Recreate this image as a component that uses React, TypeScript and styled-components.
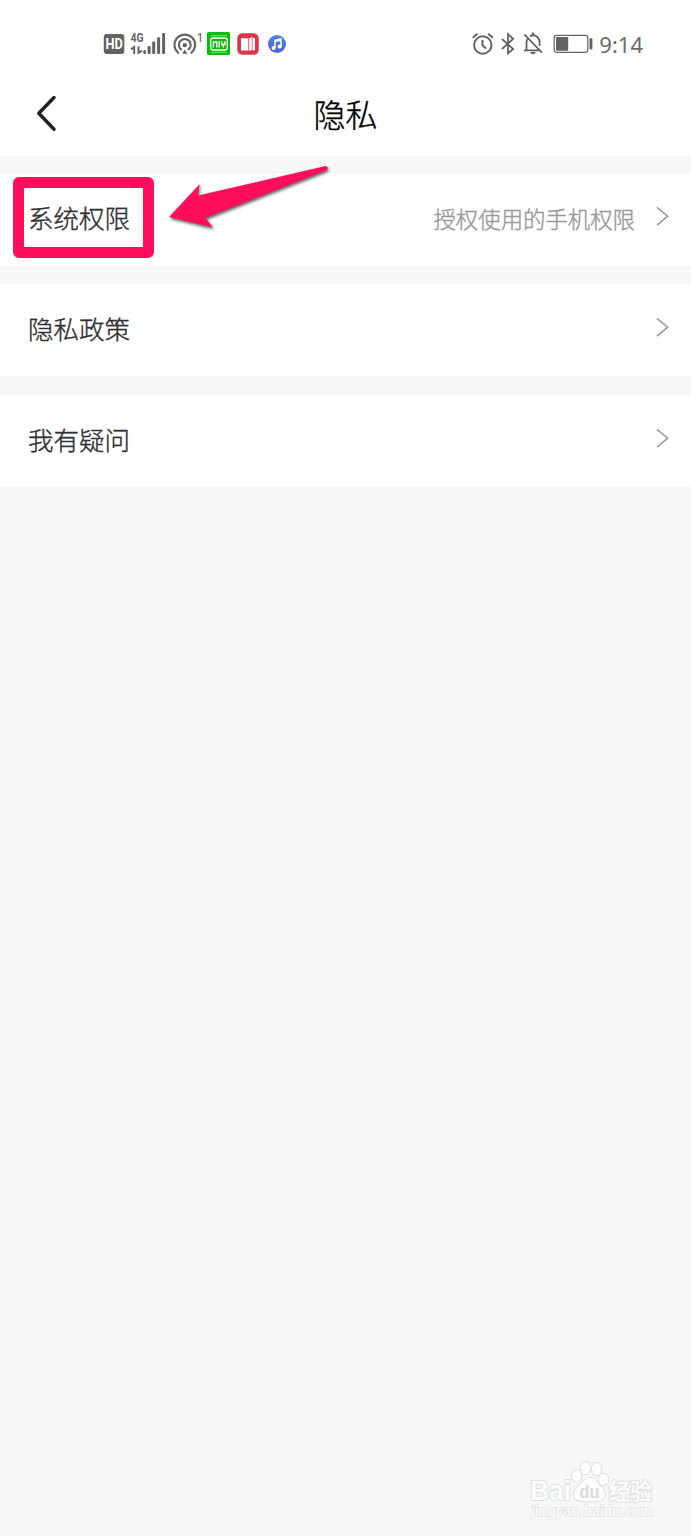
import React from "react";
import styled, { createGlobalStyle } from "styled-components";

const GlobalStyle = createGlobalStyle`
  * { box-sizing: border-box; }
  body {
    margin: 0;
    background: #f5f7f9;
    font-family: "Noto Sans", "Noto Sans CJK SC", sans-serif;
  }
  svg { display: block; flex: none; overflow: visible; }
`;

const Screen = styled.div`
  position: relative;
  display: flex;
  flex-direction: column;
  width: 691px;
  height: 1536px;
  background: #f5f7f9;
  overflow: hidden;
`;

const StatusBar = styled.header`
  display: flex;
  justify-content: space-between;
  height: 72px;
  padding: 30px 47px 0 103px;
  background: #fff;
  color: #636363;
`;

const StatusGroup = styled.div`
  display: flex;
  height: 28px;
`;

const Clock = styled.time`
  margin-left: 5px;
  margin-right: 1px;
  font-size: 22px;
  line-height: 28px;
  color: #6b6b6b;
`;

const NavBar = styled.nav`
  display: grid;
  grid-template-columns: 92px 1fr 92px;
  align-items: center;
  height: 84px;
  background: #fff;
`;

const BackButton = styled.button`
  display: flex;
  padding: 0 0 0 35px;
  border: 0;
  background: none;
`;

const Title = styled.h1`
  margin: 0;
  padding-bottom: 3px;
  text-align: center;
  font-family: "Noto Sans CJK SC", sans-serif;
  font-size: 32px;
  line-height: 48px;
  font-weight: 300;
  -webkit-text-stroke: 0.4px #000;
  color: #000;
`;

const List = styled.main`
  display: flex;
  flex-direction: column;
  gap: 18.3px;
  padding-top: 17px;
`;

const Row = styled.div`
  display: flex;
  align-items: center;
  height: 92.5px;
  padding: 0 22px 2px 28px;
  background: #fff;
  font-family: "Noto Sans CJK SC", sans-serif;
`;

const Label = styled.span`
  flex: 1;
  padding-bottom: 2px;
  font-size: 25.5px;
  line-height: 38px;
  font-weight: 300;
  -webkit-text-stroke: 0.4px #303133;
  color: #303133;
`;

const Hint = styled.span`
  margin-right: 21px;
  font-size: 22.4px;
  line-height: 34px;
  font-weight: 300;
  -webkit-text-stroke: 0.4px #999;
  color: #999;
`;

const Highlight = styled.div`
  position: absolute;
  left: 13px;
  top: 177px;
  width: 141px;
  height: 81px;
  border: 11px solid #ff0f5b;
  border-radius: 6px;
`;

const Pointer = styled.svg`
  position: absolute;
  left: 160px;
  top: 160px;
  filter: drop-shadow(1px 2px 1.5px rgba(0, 0, 0, 0.6));
`;

const Watermark = styled.svg`
  position: absolute;
  left: 520px;
  top: 1452px;
`;

const SignalIcons = () => (
  <svg width="104" height="28" viewBox="103 30 104 28" fill="#636363">
    <rect x="103.8" y="34" width="20.5" height="20" rx="3" />
    <text x="105.4" y="49.4" fontSize="14.5" fontWeight="700" fill="#fff" fontFamily="Roboto" textLength="17.4" lengthAdjust="spacingAndGlyphs">HD</text>
    <text x="130.6" y="42" fontSize="12" fontWeight="700" fontFamily="Roboto" textLength="13" lengthAdjust="spacingAndGlyphs">4G</text>
    <path d="M131 49.4l3.200-2.400v7M142 50.800l-3.500 2v-6.500" fill="none" stroke="#636363" strokeWidth="2" />
    <rect x="143.3" y="50" width="2.6" height="4" rx="1" />
    <rect x="147.6" y="46" width="3" height="8" rx="1" />
    <rect x="152.2" y="41.5" width="3" height="12.5" rx="1" />
    <rect x="157.1" y="37.3" width="3" height="16.7" rx="1" />
    <rect x="162.1" y="33" width="3" height="21" rx="1" />
    <g fill="none" stroke="#636363" strokeWidth="2.1" strokeLinecap="round">
      <path d="M178.2 52.8a10.3 10.3 0 1 1 13.2 0" />
      <path d="M181 49.4a5.9 5.9 0 1 1 7.6 0" />
    </g>
    <circle cx="184.8" cy="45.2" r="2.1" />
    <path d="M184.8 49.500l2.600 4.200h-5.200z" />
    <text x="196.4" y="42" fontSize="12.5" fontFamily="Noto Sans">1</text>
  </svg>
);

const VideoAppIcon = () => (
  <svg width="24" height="28" viewBox="207 30 24 28">
    <rect x="207" y="32" width="23" height="23" rx="1.5" fill="#08be06" />
    <rect x="210.7" y="38" width="16.6" height="12" rx="2.5" fill="none" stroke="#fff" strokeWidth="1.3" />
    <path d="M211 35.6h16M211 52.3h16" stroke="#8fe98d" strokeWidth=".8" />
    <path d="M213.400 47.500v-5.500h3.300v5.500M219.200 41.300v6.200M221.700 41.300v3.200h3.200v-3.200M223.300 44.500v3" fill="none" stroke="#fff" strokeWidth="1.4" />
  </svg>
);

const ReaderAppIcon = () => (
  <svg width="28" height="28" viewBox="231 30 28 28">
    <rect x="237.3" y="33.3" width="21.4" height="21.4" rx="5" fill="#d9364b" />
    <path d="M241 38l7 .5v12H241z" fill="#fff" />
    <path d="M248.6 38.5l4-1.8v13.5l-4 .5z" fill="#fbe3e5" />
    <path d="M253 38h2v12.3h-2z" fill="#fff" />
  </svg>
);

const MusicAppIcon = () => (
  <svg width="28" height="28" viewBox="259 30 28 28">
    <defs>
      <linearGradient id="music" x1="0" y1="0" x2="0" y2="1">
        <stop offset="0" stopColor="#4d82dc" />
        <stop offset="1" stopColor="#5265dc" />
      </linearGradient>
    </defs>
    <circle cx="277" cy="44" r="9" fill="url(#music)" />
    <path d="M275 48V40.4l6-1.5v7.6M275 41.6l6-1.5" fill="none" stroke="#fff" strokeWidth="1.5" />
    <circle cx="273.6" cy="48" r="2" fill="#fff" />
    <circle cx="279.6" cy="46.6" r="2" fill="#fff" />
  </svg>
);

const DeviceIcons = () => (
  <svg width="122" height="28" viewBox="472 30 122 28" fill="none" stroke="#636363" strokeWidth="2">
    <circle cx="482.8" cy="45" r="8.7" />
    <path d="M482.5 40v5.3l3.6 3.2M472.8 37.7l4.6-4M492.8 37.7l-4.6-4" />
    <path d="M502 39l11.2 10-5.2 4.4V34.2l5.2 4.5L502 49" strokeWidth="1.8" />
    <path d="M526.5 49.8V42a6.2 6.2 0 0 1 1.1-3M530 36.4c5-2.8 9.6 1 9.6 5.6v4M524 50.3h15.5M531.8 35.5l1.2-2 1.2 2M524.3 34.3l17.7 18.3" strokeWidth="1.8" />
    <path d="M530.4 52h5.2a2.6 2.2 0 0 1-5.2 0z" fill="#636363" stroke="none" />
    <rect x="554.2" y="35.3" width="33.6" height="17" rx="2.5" strokeWidth="1.2" />
    <rect x="556" y="37" width="12.2" height="13.7" rx="1" fill="#636363" stroke="none" />
    <rect x="589.5" y="38.2" width="2.9" height="11.2" rx="1" fill="#636363" stroke="none" />
  </svg>
);

const BackIcon = () => (
  <svg width="22" height="38" viewBox="35 95 22 38" fill="none">
    <path d="M54 97.5L38.8 113.3 54 129.3" stroke="#222" strokeWidth="3.5" strokeLinecap="round" strokeLinejoin="round" />
  </svg>
);

const ChevronIcon = () => (
  <svg width="13" height="22" viewBox="0 0 13 22" fill="none">
    <path d="M1 .3l10.7 8.9L1 18.1" stroke="#999" strokeWidth="1.5" />
  </svg>
);

const rows = [
  { label: "系统权限", hint: "授权使用的手机权限" },
  { label: "隐私政策" },
  { label: "我有疑问" },
];

export default function App() {
  return (
    <>
      <GlobalStyle />
      <Screen>
        <StatusBar>
          <StatusGroup>
            <SignalIcons />
            <VideoAppIcon />
            <ReaderAppIcon />
            <MusicAppIcon />
          </StatusGroup>
          <StatusGroup>
            <DeviceIcons />
            <Clock>9:14</Clock>
          </StatusGroup>
        </StatusBar>
        <NavBar>
          <BackButton aria-label="返回"><BackIcon /></BackButton>
          <Title>隐私</Title>
        </NavBar>
        <List>
          {rows.map((row) => (
            <Row key={row.label}>
              <Label>{row.label}</Label>
              {row.hint && <Hint>{row.hint}</Hint>}
              <ChevronIcon />
            </Row>
          ))}
        </List>
        <Highlight />
        <Pointer width="175" height="75" viewBox="160 160 175 75">
          <path d="M169 217L199.7 184 198 195.5 325.5 166Q329 167 327 170L205.5 218 213 227.5z" fill="#ff0f5b" />
        </Pointer>
        <Watermark width="140" height="74" viewBox="520 1452 140 74" fill="#fcfdfd" stroke="#dfe1e4" strokeWidth="2" paintOrder="stroke">
          <text x="530" y="1500" fontSize="28" fontWeight="700" fontFamily="Liberation Sans" textLength="41" lengthAdjust="spacingAndGlyphs">Bai</text>
          <g strokeWidth="2">
            <ellipse cx="576.5" cy="1476" rx="4.7" ry="5.8" />
            <ellipse cx="585.3" cy="1468" rx="4.6" ry="6.2" />
            <ellipse cx="596.5" cy="1469" rx="4.6" ry="6.2" />
            <ellipse cx="603.5" cy="1479.5" rx="4.9" ry="5.7" />
            <path d="M590 1478c6 0 7 5 11 8.5 6 5 5 14-3 14.5-4 .3-13 .3-17 0-8-.5-9-9-3-14.5 4-3.500 6-8.500 12-8.500z" />
          </g>
          <text x="579.5" y="1497.500" fontSize="18" fontFamily="Liberation Sans" fontWeight="700" fill="#d8dadd" stroke="none" textLength="20" lengthAdjust="spacingAndGlyphs">du</text>
          <text x="609" y="1499" fontSize="21.5" fontWeight="700" fontFamily="Noto Sans CJK SC">经验</text>
          <text x="531" y="1516" fontSize="14" fontWeight="500" fontFamily="Noto Sans" strokeWidth="1.5" textLength="122" lengthAdjust="spacingAndGlyphs">jingyan.baidu.com</text>
        </Watermark>
      </Screen>
    </>
  );
}
